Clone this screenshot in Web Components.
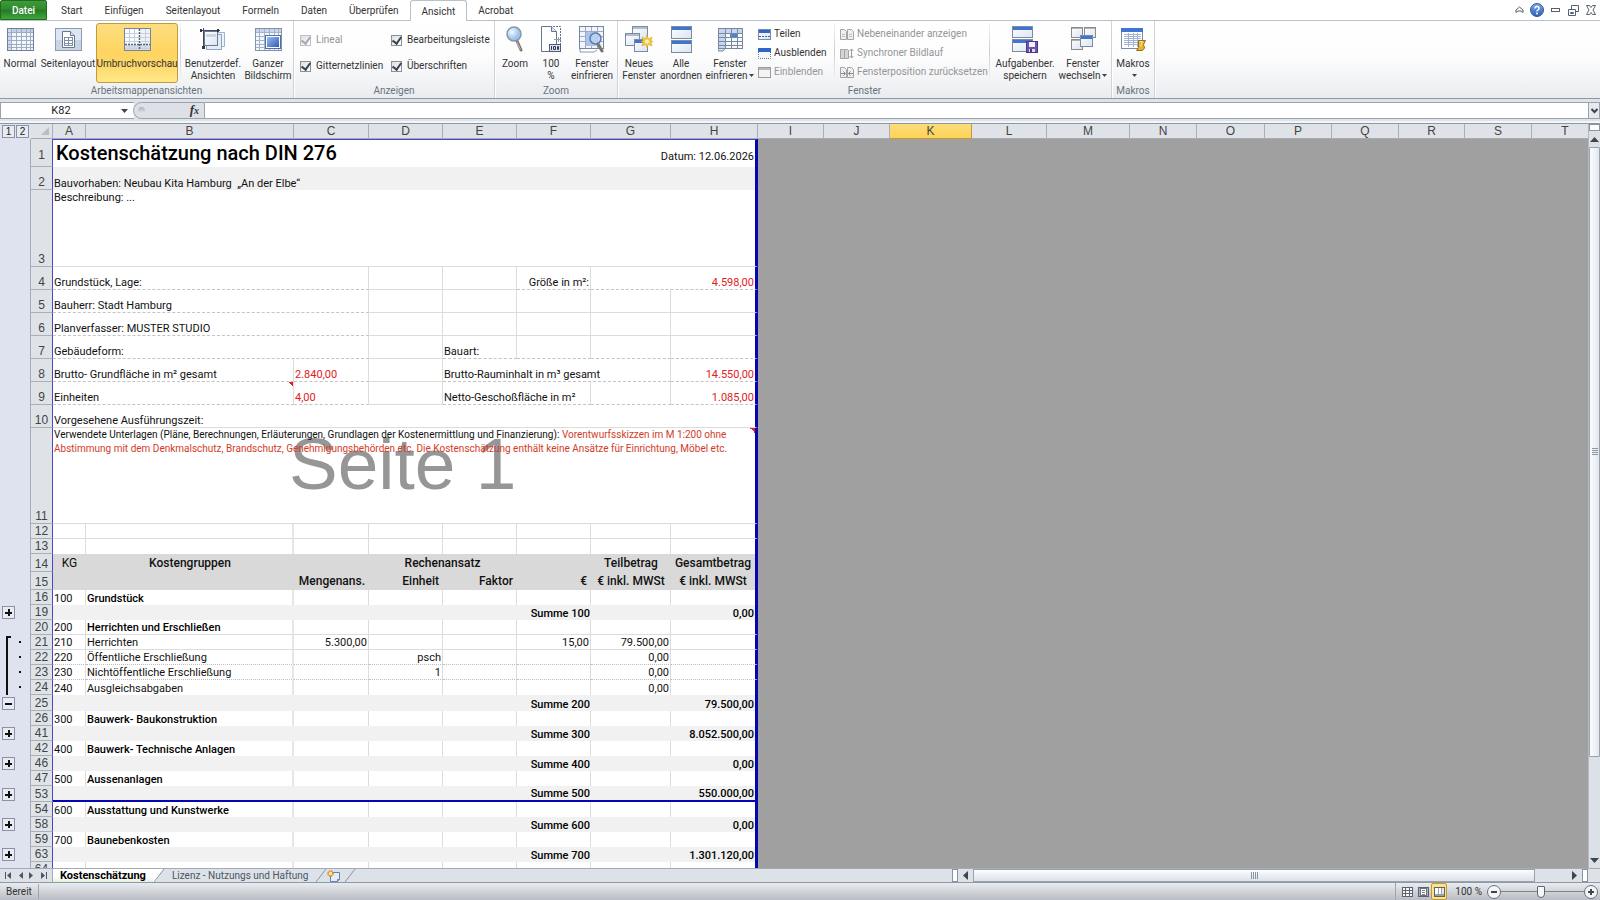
<!DOCTYPE html>
<html lang="de">
<head>
<meta charset="utf-8">
<title>Kostenschätzung nach DIN 276</title>
<style>
  html, body { margin: 0; height: 100%; }
  body { font-family: Roboto, "Liberation Sans", sans-serif; font-size: 10px; color: #333; background: #fff; overflow: hidden; }
</style>
</head>
<body>
<xl-app></xl-app>

<script>
const define = (name, css, html, setup) => {
  const template = document.createElement('template');
  template.innerHTML = `<style>*{box-sizing:border-box}button,input{font:inherit;color:inherit;margin:0;padding:0;border:0;background:none}button{cursor:pointer}svg{display:block}${css}</style>${html}`;
  customElements.define(name, class extends HTMLElement {
    constructor() {
      super();
      this.attachShadow({ mode: 'open' }).append(template.content.cloneNode(true));
    }
    connectedCallback() {
      if (setup && !this.ready) { this.ready = true; setup(this, this.shadowRoot); }
    }
  });
};

/* ---------- icons ---------- */
const rect = (x, y, w, h, fill, stroke = 'none') =>
  `<rect x="${x + .5}" y="${y + .5}" width="${w - 1}" height="${h - 1}" fill="${fill}" stroke="${stroke}"/>`;
const box = (x, y, w, h, fill) => `<rect x="${x}" y="${y}" width="${w}" height="${h}" fill="${fill}"/>`;
const grid = (x, y, w, h, xs, ys, line = '#9aabc2') =>
  `<path fill="none" stroke="${line}" d="${xs.map(a => `M${x + a + .5} ${y}v${h}`).join('')}${ys.map(b => `M${x} ${y + b + .5}h${w}`).join('')}"/>`;
const win = (x, y, w, h, bar = '#3f74d1', barH = 3, edge = '#7c8ba0') =>
  rect(x, y, w, h, 'url(#pane)', edge) + box(x + 1, y + 1, w - 2, barH, bar);
const grads = `<defs>
  <linearGradient id="pane" x2="1" y2="1"><stop stop-color="#fff"/><stop offset="1" stop-color="#d9e4f2"/></linearGradient>
  <linearGradient id="blue" x2="1" y2="1"><stop stop-color="#9dbdf0"/><stop offset="1" stop-color="#2a5cc0"/></linearGradient>
  <radialGradient id="lens" cx=".35" cy=".35"><stop stop-color="#f4fbff"/><stop offset="1" stop-color="#9cc4ec"/></radialGradient>
  <linearGradient id="help" y2="1" x2="0"><stop stop-color="#7fa9e2"/><stop offset="1" stop-color="#2b5fb4"/></linearGradient></defs>`;

const ICONS = {
  normal: [27, 23, rect(0, 0, 27, 23, '#f3f6fb', '#6f8199') + box(1, 1, 25, 3, '#c3d0e4') + box(1, 1, 3, 21, '#cfdaea') + grid(1, 1, 25, 21, [3, 8, 13, 18, 22], [3, 7, 11, 15, 18])],
  layout: [27, 23, rect(0, 0, 27, 23, '#c9d5e5', '#8a9bb2') + box(1, 1, 25, 11, '#dde6f1') + '<path d="M7.500 3.500h8l4 4v12h-12z" fill="#fff" stroke="#65768e"/><path d="M15.500 3.500v4h4" fill="#dfe8f4" stroke="#65768e"/>' + grid(9, 9, 9, 9, [0, 4, 8], [0, 3, 6, 8], '#7e90a9')],
  breaks: [27, 23, rect(0, 0, 27, 23, '#fbfcfe', '#75869d') + box(1, 17, 25, 5, '#d3dbe6') + box(17, 1, 9, 15, '#eef2f8') + grid(1, 1, 25, 21, [4, 9, 20], [4, 8, 12, 19], '#c6cfdc') + '<path d="M15.500 1v21M1 16.500h25" stroke="#55657c" stroke-width="1.500" stroke-dasharray="2 1" fill="none"/>'],
  custom: [26, 23, '<path d="M8.500 4.500h16v14h-16z" fill="#eef3fa" stroke="#9eb3d0"/><path d="M6.500 6.500h15v15h-15z" fill="#e4ecf6" stroke="#8ba3c4"/>' + rect(4, 3, 14, 15, 'url(#pane)', '#6b7a90') + box(6, 6, 10, 3, '#cdd6e2') + '<path d="M0 2.500h20M3.500 0v20" stroke="#3f4b5d"/><path d="M0 1h2v3h-2zM17 1h2v3h-2zM2 18h3v3h-3z" fill="#2d3848"/>'],
  full: [27, 23, rect(0, 0, 27, 23, '#f3f6fb', '#8193ab') + box(1, 1, 25, 3, '#c9d5e6') + grid(1, 1, 25, 21, [3, 8, 13, 18, 22], [3, 7, 11, 15, 18], '#a4b3c9') + rect(10, 7, 16, 14, '#fff', '#51709f') + box(12, 9, 12, 10, 'url(#blue)')],
  zoom: [20, 27, '<path d="M12 15l4 9" stroke="#77736f" stroke-width="3" stroke-linecap="round"/><path d="M12 16l3.500 7.500" stroke="#c4c0bb"/><circle cx="9" cy="8" r="7" fill="url(#lens)" stroke="#8a95a5" stroke-width="1.500"/>'],
  hundred: [22, 27, '<path d="M1.500 .5h10l5 5v14M1.500 .5v25h9" fill="#fff" stroke="#65768e"/><path d="M11.500 .5v5h5" fill="#dce6f3" stroke="#65768e"/><path d="M13 .5h7.500v25h-19" fill="none" stroke="#65768e" stroke-dasharray="2 1"/><path d="M14 13.500h7M18.500 11v5" stroke="#8b9ab0"/>' + rect(9, 18, 12, 8, '#dfe5ee', '#4c5c75') + '<path d="M11.500 20v4M13.500 20.500h2v3h-2zM17.500 20.500h1v3h-1z" stroke="#2d3b52" fill="none"/>'],
  zoomsel: [26, 27, rect(0, 0, 25, 23, '#f1f5fb', '#75869d') + grid(1, 1, 23, 21, [5, 11, 17], [4, 9, 14], '#9aabc2') + box(7, 6, 11, 14, '#a9c5ee') + '<path d="M1 23v3h14l3-2" fill="none" stroke="#8b9ab0"/><path d="M19 18l4 7" stroke="#77736f" stroke-width="3" stroke-linecap="round"/><circle cx="16.500" cy="12.500" r="5.500" fill="#b9d3f3" fill-opacity=".8" stroke="#5e7da8" stroke-width="1.500"/>'],
  newwin: [28, 27, win(7, 0, 16, 14, '#b6bcc6', 2) + win(0, 7, 15, 13, '#b6bcc6', 2) + win(9, 13, 14, 13) + '<path d="M22 9l1.500 4 3.500-2-1 3.500 2 1-2 1 1 3.500-3.500-1.500-1.500 3-1.500-3-3.500 1.500 1-3.500-2-1 2-1-1-3.500 3.500 2z" fill="#f5c842" stroke="#d79b1c" stroke-width=".5"/><circle cx="22" cy="15.500" r="2" fill="#fff6c4"/>'],
  arrange: [21, 27, win(0, 0, 21, 13) + win(0, 14, 21, 13)],
  freeze: [25, 27, rect(0, 2, 25, 21, '#f5f8fc', '#75869d') + box(1, 3, 23, 5, '#c5d6ee') + box(1, 3, 6, 19, '#c5d6ee') + box(12, 7, 8, 4, '#4b82d8') + grid(1, 3, 23, 19, [6, 12, 18], [4, 8, 12, 16], '#7889a0') + '<path d="M0 22.500h7l-2 2.500h-4.500z" fill="#dce6f3" stroke="#75869d"/>'],
  split: [13, 11, win(0, 0, 13, 11, '#2f66c8', 3) + '<path d="M1 7.500h11" stroke="#3a62a8" stroke-dasharray="2 1"/>'],
  hide: [13, 11, box(0, 0, 13, 4, '#2f66c8') + '<path d="M.5 4v6.500h12v-6.500" fill="#f4f8fd" stroke="#67788f" stroke-dasharray="1 1"/>'],
  show: [13, 11, rect(0, 0, 13, 11, '#f4f4f4', '#9c9c9c') + box(1, 1, 11, 2, '#b9b9b9')],
  side: [14, 11, '<path d="M.5 .5h4l2 2v8h-6zM7.500 .5h4l2 2v8h-6z" fill="#efefef" stroke="#a3a3a3"/><path d="M2 5.500h3M2 7.500h3M9 5.500h3M9 7.500h3" stroke="#c0c0c0"/>'],
  sync: [14, 11, '<path d="M.5 1.500h3l1 1v8h-4zM4.500 1.500h3l1 1v8h-4z" fill="#d5d5d5" stroke="#a3a3a3"/><path d="M11.500 1v9M9.500 3l2-2 2 2M9.500 8l2 2 2-2" fill="none" stroke="#9b9b9b"/>'],
  reset: [14, 11, '<path d="M.5 .5h4l2 2v8h-6zM7.500 .5h4l2 2v8h-6z" fill="#efefef" stroke="#a3a3a3"/><path d="M1 6.500h4M3.500 4.500l2 2-2 2M13 6.500h-4M10.500 4.500l-2 2 2 2" fill="none" stroke="#888"/>'],
  save: [26, 27, win(0, 0, 21, 12) + win(0, 13, 21, 13) + rect(14, 15, 12, 12, '#6c55a6', '#483a83') + box(17, 16, 6, 5, '#f1effa') + box(17, 23, 6, 3, '#ddd8ee') + box(18, 23, 2, 3, '#483a83')],
  switch: [25, 24, win(0, 0, 12, 11, '#b2b2b2', 1, '#8b8b8b') + win(13, 0, 12, 11, '#b2b2b2', 1, '#8b8b8b') + win(0, 12, 12, 11, '#b2b2b2', 1, '#8b8b8b') + win(9, 8, 13, 12)],
  macro: [25, 23, rect(0, 0, 22, 21, '#fff', '#7c8ba0') + box(0, 0, 22, 4, '#3f74d1') + grid(3, 5, 17, 14, [4, 9, 13], [1, 3, 5, 7, 9, 11], '#9fb3d2') + '<path d="M17.500 12.500h7l-2 4 1 3.500-2 2.500h-6l2-3z" fill="#e8b33b" stroke="#9a6f12"/><path d="M18.500 13.500h3l-2 5" stroke="#fbe7a6" fill="none"/>'],
  chevron: [9, 8, '<path d="M1 4l3.500-3 3.500 3v2.500l-2-1.500h-3l-2 1.500z" fill="#fff" stroke="#56606e"/>'],
  help: [14, 14, '<circle cx="7" cy="7" r="6.500" fill="url(#help)" stroke="#2f5a9f"/><path d="M5 5.500q0-2 2-2t2 1.800q0 1.200-1.200 1.800-.8.500-.8 1.400" fill="none" stroke="#fff" stroke-width="1.500"/><circle cx="7" cy="10.500" r="1" fill="#fff"/>'],
  min: [9, 6, '<rect x=".5" y="1.500" width="8" height="3" fill="#fff" stroke="#56606e"/>'],
  restore: [11, 11, '<path d="M3.500.5h7v6h-7z" fill="#fff" stroke="#56606e"/><path d="M.5 4.500h7v6h-7zM2.500 7.500h3v1h-3z" fill="#fff" stroke="#56606e"/>'],
  close: [10, 10, '<path d="M.5.5h3l1.500 2 1.500-2h3l-2.500 4.500 2.500 4.500h-3l-1.500-2-1.500 2h-3l2.500-4.500z" fill="#fff" stroke="#56606e"/>'],
  down: [7, 4, '<path d="M0 0h7l-3.500 4z" fill="#444"/>'],
  up: [9, 5, '<path d="M0 5h9l-4.500-5z" fill="#3f454d"/>'],
  downw: [9, 5, '<path d="M0 0h9l-4.500 5z" fill="#3f454d"/>'],
  downs: [5, 3, '<path d="M0 0h5l-2.500 3z" fill="#444"/>'],
  left: [5, 9, '<path d="M5 0v9l-5-4.500z" fill="#3f454d"/>'],
  right: [5, 9, '<path d="M0 0v9l5-4.500z" fill="#3f454d"/>'],
  first: [7, 7, '<path d="M0 0h1v7h-1zM6 0v7l-4-3.500z" fill="#4c5560"/>'],
  last: [7, 7, '<path d="M6 0h1v7h-1zM1 0v7l4-3.500z" fill="#4c5560"/>'],
  prev: [4, 7, '<path d="M4 0v7l-4-3.500z" fill="#4c5560"/>'],
  next: [4, 7, '<path d="M0 0v7l4-3.500z" fill="#4c5560"/>'],
  expand: [7, 6, '<path d="M.5 1l3 3 3-3" fill="none" stroke="#3f454d" stroke-width="2"/>'],
  newsheet: [14, 12, '<path d="M3.500 2.500h9v7l-2 2h-7z" fill="#e6edf8" stroke="#6482b4"/><path d="M10.500 11.500v-2h2" fill="#9db5da" stroke="#6482b4"/><circle cx="3.500" cy="3.500" r="2.500" fill="#fbe3a4" stroke="#d88a1a" stroke-width="1.500" stroke-dasharray="1.500 .5"/>'],
  vnormal: [11, 10, rect(0, 0, 11, 10, '#f4f6f8', '#5c636d') + grid(0, 0, 11, 10, [3, 7], [3, 6], '#5c636d')],
  vlayout: [11, 10, rect(0, 0, 11, 10, '#a9afb7', '#5c636d') + rect(2, 1, 7, 8, '#fff', '#6c737d') + grid(4, 3, 3, 5, [], [0, 2, 4], '#7c838d')],
  vbreak: [11, 10, rect(0, 0, 11, 10, '#9aa0a8', '#5c636d') + box(1, 1, 3, 6, '#fff') + box(5, 1, 2, 6, '#fff') + box(8, 1, 2, 6, '#e4e6e9')]
};

define('xl-icon', ':host{display:block;flex:none}', '', (host, root) => {
  const [w, h, art] = ICONS[host.getAttribute('name')];
  root.innerHTML += `<svg width="${w}" height="${h}" viewBox="0 0 ${w} ${h}" aria-hidden="true">${grads}${art}</svg>`;
});

/* ---------- tab strip ---------- */
define('xl-tab-strip', `
  :host{display:flex;height:21px;background:#fff;border-bottom:1px solid #b9c0c9}
  nav{display:flex;flex:1;height:21px}
  button{height:20px;line-height:22px;padding:0 11px;text-align:center}
  .file{background:linear-gradient(#3f9a3a,#2e8a2c 45%,#237a24 50%,#41a53c);color:#fff;padding:0;width:47px;margin-right:3px;border:1px solid #1f6b20;border-radius:2px 2px 0 0;line-height:20px;font-weight:500}
  .on{border:1px solid #b9c0c9;border-bottom:0;border-radius:3px 3px 0 0;background:#fff;height:21px;padding:0 11px;line-height:21px}
  .sys{display:flex;align-items:center}
  .sys button{width:18px;height:20px;display:grid;place-items:center;padding:0}
`, `<nav>
  <button class="file">Datei</button><button>Start</button><button>Einfügen</button><button>Seitenlayout</button><button>Formeln</button><button>Daten</button><button>Überprüfen</button><button class="on">Ansicht</button><button>Acrobat</button>
</nav>
<div class="sys">
  <button aria-label="Menüband minimieren"><xl-icon name="chevron"></xl-icon></button>
  <button aria-label="Hilfe"><xl-icon name="help"></xl-icon></button>
  <button aria-label="Minimieren"><xl-icon name="min"></xl-icon></button>
  <button aria-label="Wiederherstellen"><xl-icon name="restore"></xl-icon></button>
  <button aria-label="Schließen"><xl-icon name="close"></xl-icon></button>
</div>`);

/* ---------- ribbon ---------- */
define('ribbon-button', `
  :host{display:block;flex:none}
  button{width:100%;height:60px;border:1px solid transparent;border-radius:3px;padding:1px 0 0;display:flex;flex-direction:column;align-items:center;line-height:12px;white-space:nowrap}
  .pic{height:28px;margin-bottom:5px;display:flex;align-items:center}
  :host([active]) button{background:linear-gradient(#fcdd7e,#ffd561 50%,#fdd768 70%,#ffe98a);border-color:#c29a3b}
  .more{display:none}
  :host([menu]) .more{display:inline-block;vertical-align:2px;margin-left:2px}
  .txt{text-align:center}
`, `<button><span class="pic"></span><span class="txt"><slot></slot><xl-icon class="more" name="downs"></xl-icon></span></button>`,
(host, root) => {
  const icon = document.createElement('xl-icon');
  icon.setAttribute('name', host.getAttribute('icon'));
  root.querySelector('.pic').append(icon);
});

define('ribbon-command', `
  :host{display:block}
  button{display:flex;align-items:center;gap:3px;height:14px;line-height:14px;white-space:nowrap}
  button:disabled{color:#959595}
`, `<button><slot></slot></button>`, (host, root) => {
  const button = root.querySelector('button');
  const icon = document.createElement('xl-icon');
  icon.setAttribute('name', host.getAttribute('icon'));
  button.prepend(icon);
  button.disabled = host.hasAttribute('disabled');
});

define('ribbon-check', `
  :host{display:block}
  label{display:flex;align-items:center;gap:5px;height:14px;line-height:14px;white-space:nowrap}
  input{appearance:none;flex:none;width:11px;height:11px;border:1px solid #8b9096;background:linear-gradient(135deg,#dcdfe3,#fff);display:grid;place-items:center}
  input:checked::after{content:"";width:4px;height:7px;border:solid #3c4450;border-width:0 2px 2px 0;transform:rotate(35deg);margin-top:-2px}
  :host([disabled]) label{color:#959595}
  :host([disabled]) input{border-color:#bcbfc3}
  :host([disabled]) input::after{border-color:#a5a9ae}
`, `<label><input type="checkbox" checked><slot></slot></label>`, (host, root) => {
  root.querySelector('input').disabled = host.hasAttribute('disabled');
});

define('ribbon-group', `
  :host{display:flex;flex-direction:column;flex:none;height:77px;border-right:1px solid #cfd3d8;box-shadow:1px 0 #fff}
  .body{display:flex;height:63px;padding-top:2px}
  .cap{line-height:13px;text-align:center;color:#6a7280}
`, `<div class="body"><slot></slot></div><div class="cap"></div>`, (host, root) => {
  root.querySelector('.cap').textContent = host.getAttribute('caption');
});

define('xl-ribbon', `
  :host{display:flex;height:78px;background:linear-gradient(#fff,#fdfdfe 45%,#f3f4f6 75%,#e9ecef);border-bottom:1px solid #8e99a8}
  .sep{width:1px;height:56px;background:linear-gradient(#f4f4f4,#c9cdd2,#f0f0f0);margin:0 2px}
  .col + .sep{margin:0 5px 0 3px}
  .col{display:flex;flex-direction:column;gap:5px;padding-top:4px;width:73px}
  .wide{width:146px}
  .checks{display:grid;grid-template-columns:84px 98px;gap:12px 7px;padding:10px 5px 0 6px;align-content:start}
  .w32{width:32px}.w40{width:40px}.w42{width:42px}.w50{width:50px}.w54{width:54px}.w56{width:56px}.w60{width:60px}.w82{width:82px}
`, `
<ribbon-group caption="Arbeitsmappenansichten">
  <ribbon-button class="w40" icon="normal">Normal</ribbon-button>
  <ribbon-button class="w56" icon="layout">Seitenlayout</ribbon-button>
  <ribbon-button class="w82" icon="breaks" active>Umbruchvorschau</ribbon-button>
  <div class="sep"></div>
  <ribbon-button class="w60" icon="custom">Benutzerdef.<br>Ansichten</ribbon-button>
  <ribbon-button class="w50" icon="full">Ganzer<br>Bildschirm</ribbon-button>
</ribbon-group>
<ribbon-group caption="Anzeigen">
  <div class="checks">
    <ribbon-check disabled>Lineal</ribbon-check><ribbon-check>Bearbeitungsleiste</ribbon-check>
    <ribbon-check>Gitternetzlinien</ribbon-check><ribbon-check>Überschriften</ribbon-check>
  </div>
</ribbon-group>
<ribbon-group caption="Zoom">
  <ribbon-button class="w40" icon="zoom">Zoom</ribbon-button>
  <ribbon-button class="w32" icon="hundred">100<br>%</ribbon-button>
  <ribbon-button class="w50" icon="zoomsel">Fenster<br>einfrieren</ribbon-button>
</ribbon-group>
<ribbon-group caption="Fenster">
  <ribbon-button class="w42" icon="newwin">Neues<br>Fenster</ribbon-button>
  <ribbon-button class="w42" icon="arrange">Alle<br>anordnen</ribbon-button>
  <ribbon-button class="w56" icon="freeze" menu>Fenster<br>einfrieren</ribbon-button>
  <div class="col">
    <ribbon-command icon="split">Teilen</ribbon-command><ribbon-command icon="hide">Ausblenden</ribbon-command><ribbon-command icon="show" disabled>Einblenden</ribbon-command>
  </div>
  <div class="sep"></div>
  <div class="col wide">
    <ribbon-command icon="side" disabled>Nebeneinander anzeigen</ribbon-command><ribbon-command icon="sync" disabled>Synchroner Bildlauf</ribbon-command><ribbon-command icon="reset" disabled>Fensterposition zurücksetzen</ribbon-command>
  </div>
  <div class="sep"></div>
  <ribbon-button class="w60" icon="save">Aufgabenber.<br>speichern</ribbon-button>
  <ribbon-button class="w56" icon="switch" menu>Fenster<br>wechseln</ribbon-button>
</ribbon-group>
<ribbon-group caption="Makros">
  <ribbon-button class="w42" icon="macro" menu>Makros<br></ribbon-button>
</ribbon-group>`);

/* ---------- formula bar ---------- */
define('xl-formula-bar', `
  :host{display:flex;height:25px;padding:3px 0 4px;background:#dfe3e8;border-bottom:1px solid #8e99a8;box-shadow:inset 0 -2px #f3f5f7}
  .name{display:flex;align-items:center;width:134px;background:#fff;border:1px solid #9aa2ad;border-width:1px 0 1px 1px;padding-right:6px}
  .name input{flex:1;min-width:0;text-align:center;font-size:11px;color:#222;outline:0}
  .fx{display:flex;align-items:center;justify-content:space-between;width:72px;border:1px solid #9aa2ad;border-radius:9px 0 0 9px;padding:0 5px 0 4px;background:#dde1e7;margin-left:-1px}
  .dot{width:7px;height:7px;border-radius:50%;background:linear-gradient(#aeb3ba,#e8eaed)}
  .fx button{font:italic bold 13px/14px "Liberation Serif",serif;color:#333}
  .fx small{font-size:10px}
  .formula{flex:1;background:#fff;border:1px solid #9aa2ad;border-width:1px 0;outline:0}
  .expand{width:12px;border:1px solid #9aa2ad;display:grid;place-items:center;background:#e6e9ee}
`, `<div class="name"><input aria-label="Namenfeld" value="K82"><button aria-label="Namen anzeigen"><xl-icon name="down"></xl-icon></button></div>
<div class="fx"><span class="dot"></span><button aria-label="Funktion einfügen">f<small>x</small></button></div>
<input class="formula" aria-label="Bearbeitungsleiste">
<button class="expand" aria-label="Bearbeitungsleiste erweitern"><xl-icon name="expand"></xl-icon></button>`);

/* ---------- worksheet ---------- */
const COLS = { A: 33, B: 208, C: 75, D: 74, E: 74, F: 74, G: 80, H: 87, I: 66, J: 66, K: 82, L: 75, M: 83, N: 67, O: 68, P: 67, Q: 67, R: 66, S: 67, T: 67 };

/* A cell is [text, classes, colspan]. Classes: s solid / d dashed / t dotted bottom line, v right line, r right aligned. */
const e = (cls, n = 1) => Array.from({ length: n }, () => ['', cls]);
const item = (kg, name, line, mid = ['', '', '', '', ''], bold = '') =>
  [[kg, line + ' v'], [name, line + ' v v2 ' + bold], ...mid.map((t, i) => [t, line + ' v r']), ['', line]];
const sum = (name, value) => [['', '', 5], [name, 'r b'], ['', ''], [value, 'r b']];
const head = (kg, name) => item(kg, name, '', undefined, 'b');

const ROWS = [
  [1, 'h28 first', [['Kostenschätzung nach DIN 276', 'title', 5], ['Datum: 12.06.2026', 'r', 3]]],
  [2, 'h23 band', [['Bauvorhaben: Neubau Kita Hamburg &nbsp;„An der Elbe“', '', 8]]],
  [3, 'h77', [['Beschreibung: ...', 'top s', 8]]],
  [4, 'h23', [['Grundstück, Lage:', 'd v', 3], ...e('s v', 2), ['Größe in m²:', 'd r v'], ['4.598,00', 'd r red', 2]]],
  [5, 'h23', [['Bauherr: Stadt Hamburg', 'd v', 3], ...e('s v', 4), ...e('s')]],
  [6, 'h23', [['Planverfasser: MUSTER STUDIO', 'd v', 3], ...e('s v', 4), ...e('s')]],
  [7, 'h23', [['Gebäudeform:', 'd v', 3], ...e('s v'), ['Bauart:', 'd v'], ...e('d v', 2), ...e('d')]],
  [8, 'h23', [['Brutto- Grundfläche in m² gesamt', 'd v', 2], ['2.840,00', 'd v red'], ...e('s v'), ['Brutto-Rauminhalt in m³ gesamt', 'd v', 3], ['14.550,00', 'd r red']]],
  [9, 'h23', [['Einheiten', 'd v note', 2], ['4,00', 'd v red'], ...e('s v'), ['Netto-Geschoßfläche in m²', 'd v', 2], ...e('d v'), ['1.085,00', 'd r red']]],
  [10, 'h23', [['Vorgesehene Ausführungszeit:', 's', 8]]],
  [11, 'h96', [['<span class="mark">Seite 1</span><span class="over">Verwendete Unterlagen (Pläne, Berechnungen, Erläuterungen, Grundlagen der Kostenermittlung und Finanzierung): <span class="red2">Vorentwurfsskizzen im M 1:200 ohne<br>Abstimmung mit dem Denkmalschutz, Brandschutz, Genehmigungsbehörden etc. Die Kostenschätzung enthält keine Ansätze für Einrichtung, Möbel etc.</span></span>', 'long top s note', 8]]],
  [12, 'h15', item('', '', 's')],
  [13, 'h15', item('', '', '')],
  [14, 'h18 caption', [['KG', 'plain'], ['Kostengruppen', ''], ['Rechenansatz', '', 4], ['Teilbetrag', ''], ['Gesamtbetrag', '']]],
  [15, 'h18 caption', [['', ''], ['', ''], ['Mengenans.', 'r'], ['Einheit', 'r'], ['Faktor', 'r'], ['€', 'r'], ['€ inkl. MWSt', ''], ['€ inkl. MWSt', '']]],
  [16, 'h15', head('100', 'Grundstück')],
  [19, 'h15 band', sum('Summe 100', '0,00'), 'plus'],
  [20, 'h15', item('200', 'Herrichten und Erschließen', 's', undefined, 'b')],
  [21, 'h15', item('210', 'Herrichten', 's', ['5.300,00', '', '', '15,00', '79.500,00']), 'open dot'],
  [22, 'h15', item('220', 'Öffentliche Erschließung', 't', ['', 'psch', '', '', '0,00']), 'line dot'],
  [23, 'h15', item('230', 'Nichtöffentliche Erschließung', 't', ['', '1', '', '', '0,00']), 'line dot'],
  [24, 'h15', item('240', 'Ausgleichsabgaben', '', ['', '', '', '', '0,00']), 'line dot'],
  [25, 'h16 band', sum('Summe 200', '79.500,00'), 'minus'],
  [26, 'h15', head('300', 'Bauwerk- Baukonstruktion')],
  [41, 'h15 band', sum('Summe 300', '8.052.500,00'), 'plus'],
  [42, 'h15', head('400', 'Bauwerk- Technische Anlagen')],
  [46, 'h15 band', sum('Summe 400', '0,00'), 'plus'],
  [47, 'h15', head('500', 'Aussenanlagen')],
  [53, 'h16 band pagebreak', sum('Summe 500', '550.000,00'), 'plus'],
  [54, 'h15', head('600', 'Ausstattung und Kunstwerke')],
  [58, 'h15 band', sum('Summe 600', '0,00'), 'plus'],
  [59, 'h15', head('700', 'Baunebenkosten')],
  [63, 'h15 band', sum('Summe 700', '1.301.120,00'), 'plus'],
  [64, 'h15', item('', '', '')]
];

define('xl-sheet', `
  :host{display:block;flex:1;min-width:0;overflow:hidden;background:#a0a0a0}
  table{border-collapse:separate;border-spacing:0;table-layout:fixed;width:max-content;font-size:11px;color:#111}
  th,td{padding:0;white-space:nowrap;overflow:hidden}
  thead th{height:15px;background:#dfe3e8;border-right:1px solid #a9b0ba;border-bottom:1px solid #a3abb6;font:12px/14px "Liberation Sans",sans-serif;color:#444}
  thead th.sel{background:linear-gradient(#fbdc7c,#fdd355);border-color:#c29a3b}
  thead th.out{background:#dfe3ef;border-color:#dfe3ef}
  thead .levels{display:flex;gap:1px;padding-left:2px}
  .levels button{width:13px;height:13px;border:1px solid #8b93a3;font:10px/11px "Liberation Sans",sans-serif;background:#e8ebf3;color:#222;text-align:center}
  .corner svg{margin:0 3px 0 auto}
  tbody td{background:#fff;vertical-align:bottom;padding:0 1px;line-height:13px}
  tbody td.out{background:#dfe3ef;padding:0;border-right:1px solid #a3abb6;vertical-align:middle}
  tbody th{background:#dfe3e8;border-bottom:1px solid #a9b0ba;border-right:1px solid #4a46c4;font:12px/14px "Liberation Sans",sans-serif;color:#444;vertical-align:bottom}
  td.edge{border-right:3px solid #0505b4}
  td.void{background:#a0a0a0}
  .h15>*{height:15px}.h16>*{height:16px}.h18>*{height:18px}.h23>*{height:23px}.h28>*{height:28px}.h77>*{height:77px}.h96>*{height:96px}
  .h28 td,.h28 th{padding-bottom:4px}
  .first td.cell{border-top:1px solid #4a46c4}
  td.title{font-size:20px;line-height:26px;font-weight:500;padding:0 3px;color:#000;vertical-align:top}
  tr.band td.cell{background:#f1f1f1}
  tr.caption td.cell{background:#d9d9d9;font-size:12px;line-height:17px;font-weight:500;text-align:center}
  tr.caption td.plain{font-weight:400}
  tr.pagebreak td.cell{border-bottom:2px solid #0505b4}
  td.s{border-bottom:1px solid #dcdcdc}
  td.d{border-bottom:1px dashed #c4c4c4}
  td.t{border-bottom:1px dotted #bdbdbd}
  td.v{border-right:1px solid #dcdcdc}
  td.v2{border-right:2px solid #e6e6e6}
  td.r,tr.caption td.r{text-align:right}
  tr.caption td.r{padding-right:4px}
  td.b{font-weight:500;color:#000}
  td.top{vertical-align:top;line-height:15px}
  td.long{font-size:10px;line-height:14px}
  td.red{color:#e2211c}
  .red2{color:#d23c2a}
  td.note{position:relative}
  td.note::after{content:"";position:absolute;top:0;right:0;width:5px;height:5px;background:linear-gradient(225deg,#d22 50%,transparent 50%)}
  .mark{position:absolute;left:236px;top:0;font:73px/72px "Liberation Sans",sans-serif;color:#969696;pointer-events:none}
  .over{position:relative}
  td.out button{display:block;width:13px;height:13px;margin-left:2px;border:1px solid #8b93a3;background:#e8ebf3;position:relative}
  td.out button::before{content:"";position:absolute;left:2px;top:5px;width:7px;height:2px;background:#111}
  td.out.plus button::after{content:"";position:absolute;left:5px;top:2px;width:2px;height:7px;background:#111}
  td.out.dot{background:radial-gradient(circle at 20px 7px,#111 1px,transparent 1px),linear-gradient(#111,#111) 6px 0/2px 15px no-repeat,#dfe3ef}
  td.out.open{background:radial-gradient(circle at 20px 7px,#111 1px,transparent 1px),linear-gradient(#111,#111) 6px 1px/2px 15px no-repeat,linear-gradient(#111,#111) 6px 1px/5px 2px no-repeat,#dfe3ef}
`, `<table><colgroup></colgroup><thead><tr></tr></thead><tbody></tbody></table>`, (host, root) => {
  const cols = Object.entries(COLS);
  root.querySelector('colgroup').innerHTML = [31, 22, ...cols.map(c => c[1])].map(w => `<col style="width:${w}px">`).join('');
  const total = 53 + cols.reduce((a, c) => a + c[1], 0);
  root.querySelector('table').style.width = total + 'px';
  root.querySelector('thead tr').innerHTML =
    '<th class="out"><div class="levels"><button>1</button><button>2</button></div></th>' +
    '<th class="corner"><svg width="8" height="8" viewBox="0 0 8 8"><path d="M8 0v8H0z" fill="#b9bec6"/></svg></th>' +
    cols.map(([c]) => `<th scope="col"${c === 'K' ? ' class="sel"' : ''}>${c}</th>`).join('');
  root.querySelector('tbody').innerHTML = ROWS.map(([n, cls, cells, out = ''], i) =>
    `<tr class="${cls}"><td class="out ${out}">${/plus|minus/.test(out) ? `<button aria-label="Gruppierung Zeile ${n}"></button>` : ''}</td><th scope="row">${n}</th>` +
    cells.map(([t, c, span = 1], k) => `<td class="cell ${c} ${k === cells.length - 1 ? 'edge' : ''}" colspan="${span}">${t}</td>`).join('') +
    (i ? '' : `<td class="void" colspan="12" rowspan="${ROWS.length}"></td>`) + '</tr>').join('');
});

/* ---------- scroll bars ---------- */
define('xl-vscroll', `
  :host{display:flex;flex-direction:column;width:12px;background:#dce1e8;border-left:1px solid #b4bac4}
  button{display:grid;place-items:center;height:16px;flex:none}
  .split{height:7px;border:1px solid #8b93a3;background:#fff}
  .track{flex:1;display:flex;flex-direction:column}
  .thumb{flex:611;border:1px solid #9aa2ae;border-radius:1px;background:linear-gradient(90deg,#fbfcfd,#e3e7ed);height:auto}
  .thumb i{width:6px;height:7px;background:repeating-linear-gradient(#8d95a0 0 1px,transparent 1px 2px)}
  .rest{flex:96}
`, `<button class="split" aria-label="Teilen"></button><button aria-label="Nach oben"><xl-icon name="up"></xl-icon></button>
<div class="track"><button class="thumb" aria-label="Bildlauf"><i></i></button><div class="rest"></div></div>
<button aria-label="Nach unten"><xl-icon name="downw"></xl-icon></button>`);

define('xl-sheet-tabs', `
  :host{display:flex;height:15px;background:#dde2e9;border-top:1px solid #a3abb6;border-bottom:1px solid #8e99a8}
  button{display:grid;place-items:center}
  .nav{display:flex;width:53px;justify-content:space-between;padding:0 5px 0 5px;border-right:1px solid #a3abb6;align-items:center}
  .tabs{display:flex;flex:1}
  .tab{display:block;padding:0 7px;line-height:14px;color:#4c5560;height:13px}
  .on{background:linear-gradient(#fff 60%,#e3f0d8);color:#000;font-weight:700;font-size:11px}
  .slant{flex:none}
  .h{display:flex;width:648px}
  .grip{width:6px;border:1px solid #8b93a3;background:#fff}
  .arrow{width:15px}
  .thumb{flex:561;border:1px solid #9aa2ae;background:linear-gradient(#fbfcfd,#dde2e9)}
  .thumb i{width:7px;height:7px;background:repeating-linear-gradient(90deg,#8d95a0 0 1px,transparent 1px 2px)}
  .rest{flex:32}
  .end{width:12px}
`, `<div class="nav"><button aria-label="Erstes Blatt"><xl-icon name="first"></xl-icon></button><button aria-label="Vorheriges Blatt"><xl-icon name="prev"></xl-icon></button><button aria-label="Nächstes Blatt"><xl-icon name="next"></xl-icon></button><button aria-label="Letztes Blatt"><xl-icon name="last"></xl-icon></button></div>
<div class="tabs"><button class="tab on">Kostenschätzung</button>
<svg class="slant" width="12" height="13" viewBox="0 0 12 13"><path d="M0 0h11L2 13H0z" fill="#fff"/><path d="M11 0L1 13" stroke="#8b93a3"/></svg>
<button class="tab">Lizenz - Nutzungs und Haftung</button>
<svg class="slant" width="12" height="13" viewBox="0 0 12 13"><path d="M11 0L1 13" stroke="#8b93a3"/></svg>
<button aria-label="Tabellenblatt einfügen"><xl-icon name="newsheet"></xl-icon></button>
<svg class="slant" width="16" height="13" viewBox="0 0 16 13"><path d="M14 0L4 13" stroke="#8b93a3"/></svg></div>
<div class="h"><button class="grip" aria-label="Registerleiste teilen"></button><button class="arrow" aria-label="Nach links"><xl-icon name="left"></xl-icon></button><button class="thumb" aria-label="Bildlauf"><i></i></button><div class="rest"></div><button class="arrow" aria-label="Nach rechts"><xl-icon name="right"></xl-icon></button><button class="grip" aria-label="Teilen"></button><span class="end"></span></div>`);

/* ---------- status bar ---------- */
define('xl-status-bar', `
  :host{display:flex;align-items:center;height:17px;padding-right:2px;background:linear-gradient(#e9ecef,#ccd0d5 60%,#b9bdc4)}
  .msg{padding:0 6px;border-right:1px solid #9fa5ad;line-height:15px;flex:none}
  .views{margin-left:auto;display:flex;align-items:center;border-left:1px solid #9fa5ad;height:17px;padding-left:3px}
  .views button{width:16px;height:17px;display:grid;place-items:center}
  .views .on{background:#fbe38a;border:1px solid #c9972b;border-radius:2px}
  .pct{padding:0 5px 0 8px}
  .round{width:14px;height:14px;border:1px solid #6a717b;border-radius:50%;background:#f3f4f6;position:relative}
  .round::before,.plus::after{content:"";position:absolute;left:3px;top:5px;width:6px;height:2px;background:#3f454d}
  .plus::after{transform:rotate(90deg)}
  input{appearance:none;width:83px;height:14px;background:linear-gradient(#7d848e,#7d848e) 0 6px/100% 1px no-repeat,linear-gradient(#7d848e,#7d848e) 50% 4px/1px 6px no-repeat}
  input::-webkit-slider-thumb{appearance:none;width:8px;height:12px;background:#f6f7f8;border:1px solid #5f6670;border-radius:1px 1px 4px 4px}
`, `<span class="msg">Bereit</span>
<div class="views"><button aria-label="Normal"><xl-icon name="vnormal"></xl-icon></button><button aria-label="Seitenlayout"><xl-icon name="vlayout"></xl-icon></button><button class="on" aria-label="Umbruchvorschau"><xl-icon name="vbreak"></xl-icon></button></div>
<button class="pct">100 %</button>
<button class="round" aria-label="Verkleinern"></button><input type="range" min="0" max="200" value="97" aria-label="Zoom"><button class="round plus" aria-label="Vergrößern"></button>`);

define('xl-app', `
  :host{display:flex;flex-direction:column;height:100vh}
  .work{display:flex;flex:1;min-height:0}
`, `<xl-tab-strip></xl-tab-strip><xl-ribbon></xl-ribbon><xl-formula-bar></xl-formula-bar>
<div class="work"><xl-sheet></xl-sheet><xl-vscroll></xl-vscroll></div>
<xl-sheet-tabs></xl-sheet-tabs><xl-status-bar></xl-status-bar>`);
</script>
</body>
</html>
